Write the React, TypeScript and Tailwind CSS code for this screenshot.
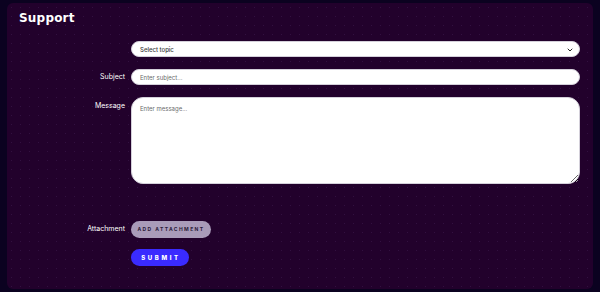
import { ChevronDown } from 'lucide-react';

export default function App() {
  return (
    <div className="w-[600px] h-[292px] bg-[#0b0220] px-[7px] py-[3px] font-['Inter',sans-serif]">
      <div className="h-full rounded-[6px] bg-[#22012c] bg-[radial-gradient(circle,#321040_0.6px,transparent_0.8px)] bg-[length:9px_9px] pt-[7px] pl-[12px] pr-[13px]">
        {/* Title */}
        <h1 className="text-[12px] leading-[16px] font-bold text-white font-['DejaVu_Sans',sans-serif] tracking-[0.2px]">
          Support
        </h1>

        {/* Form */}
        <div className="mt-[15px] flex flex-col">
          <div className="flex">
            <div className="w-[112px] shrink-0" />
            <div className="relative flex-1 h-[16px] rounded-full bg-white border border-[#d4d0da] flex items-center pl-[8px]">
              <span className="text-[6px] text-[#3a3a3a] font-medium">Select topic</span>
              <ChevronDown className="absolute right-[5px] top-[4px] w-[8px] h-[8px] text-[#222]" strokeWidth={3} />
            </div>
          </div>

          <div className="flex mt-[12px]">
            <div className="w-[112px] shrink-0 h-[16px] flex items-center justify-end pr-[6px] text-[7px] text-white">Subject</div>
            <input
              className="flex-1 h-[16px] rounded-full bg-white border border-[#d4d0da] px-[8px] text-[6px] text-[#333] placeholder:text-[#6b6b6b] outline-none"
              placeholder="Enter subject..."
            />
          </div>

          <div className="flex mt-[12px] h-[87px]">
            <div className="w-[112px] shrink-0 pt-[4px] flex justify-end pr-[6px] text-[7px] leading-[10px] text-white">Message</div>
            <textarea
              className="flex-1 h-[87px] rounded-[12px] bg-white border border-[#d4d0da] px-[8px] py-[6px] text-[6px] text-[#333] placeholder:text-[#6b6b6b] outline-none resize-y block"
              placeholder="Enter message..."
            />
          </div>

          <div className="flex mt-[37px]">
            <div className="w-[112px] shrink-0 h-[17px] flex items-center justify-end pr-[6px] text-[7px] text-white">Attachment</div>
            <button className="h-[17px] w-[80px] rounded-full bg-[#a99bb9] text-[5px] font-bold tracking-[1.4px] text-[#2a1a38] uppercase">
              Add attachment
            </button>
          </div>

          <div className="flex mt-[11px]">
            <div className="w-[112px] shrink-0" />
            <button className="h-[17px] w-[58px] rounded-full bg-[#3a2bff] text-[6px] font-extrabold tracking-[2.6px] text-white uppercase pl-[2px]">
              Submit
            </button>
          </div>
        </div>
      </div>
    </div>
  );
}
